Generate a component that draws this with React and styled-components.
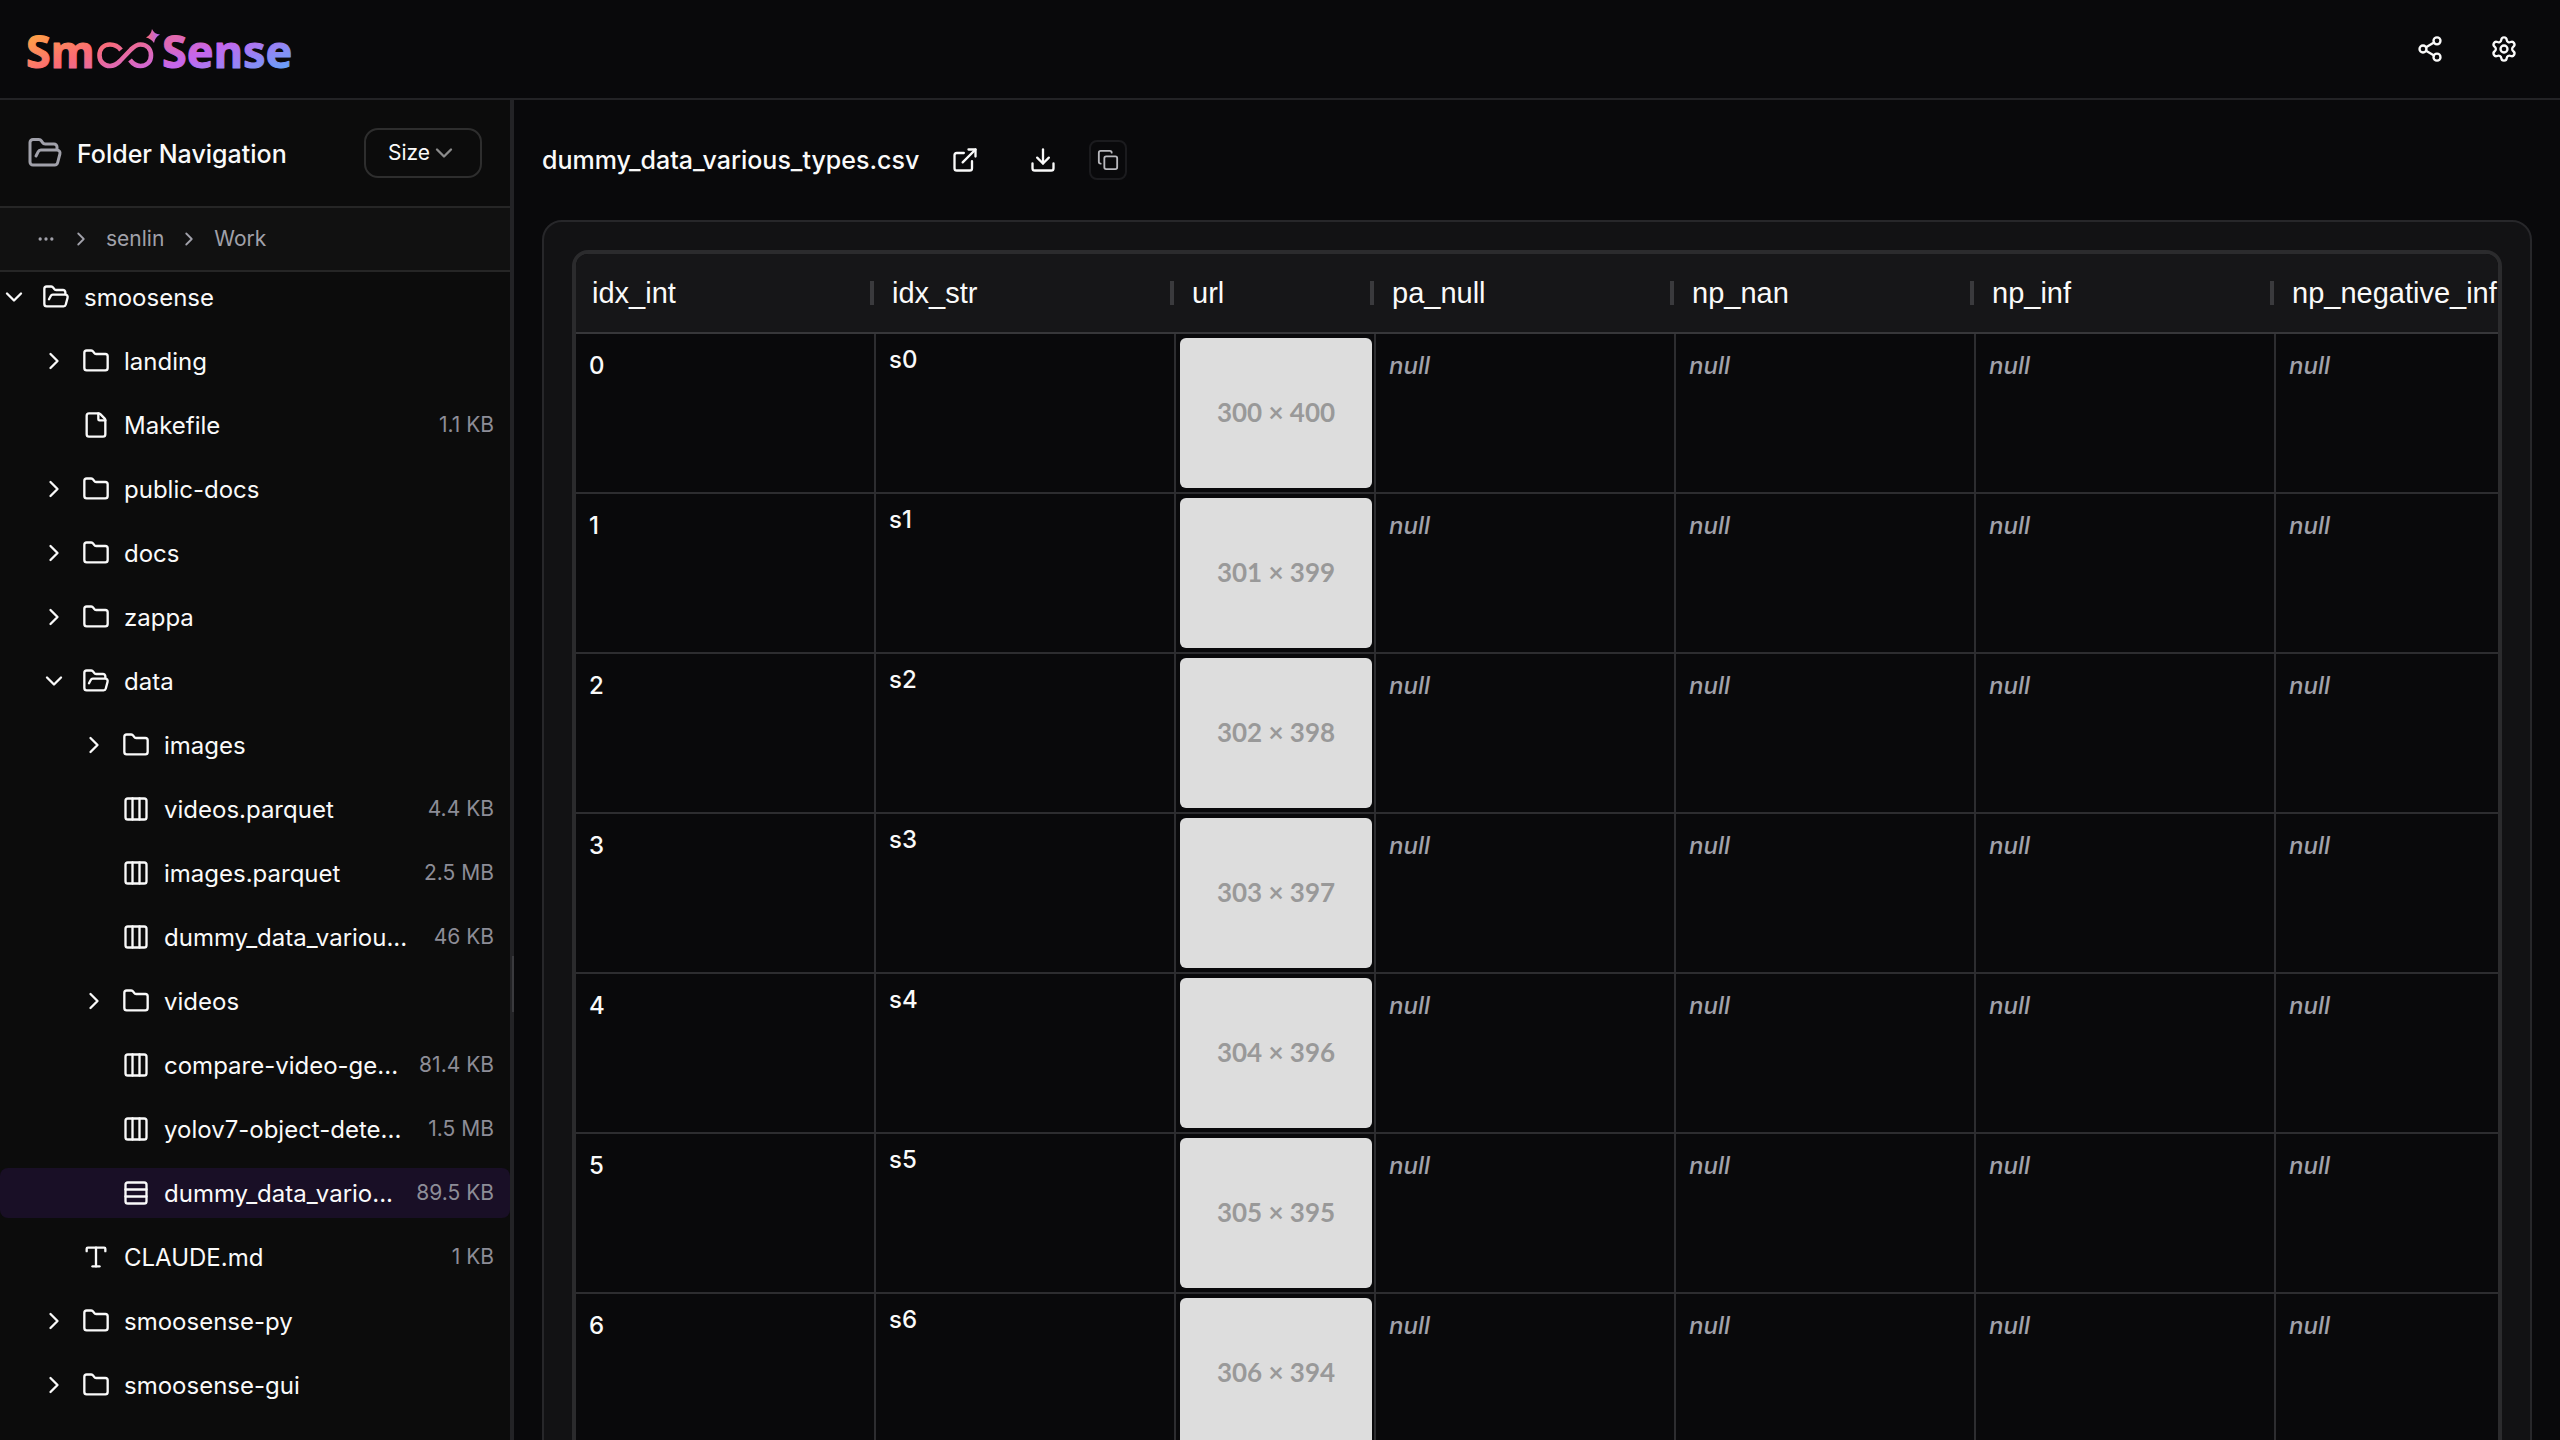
import React from "react";
import styled, { createGlobalStyle } from "styled-components";
import {
  ChevronDown,
  ChevronRight,
  Columns3,
  Copy,
  Download,
  Ellipsis,
  ExternalLink,
  File,
  Folder,
  FolderOpen,
  Rows3,
  Settings,
  Share2,
  Type,
} from "lucide-react";

const GlobalStyle = createGlobalStyle`
  *, *::before, *::after { box-sizing: border-box; }
  html, body, #root { height: 100%; }
  body {
    margin: 0;
    overflow: hidden;
    background: #09090b;
    color: #fafafa;
    font-family: Inter, "Noto Sans", sans-serif;
    font-size: 24px;
    line-height: 32px;
  }
  button, select { font: inherit; color: inherit; }
  svg { display: block; flex-shrink: 0; }
`;

const Page = styled.div`
  display: flex;
  flex-direction: column;
  height: 100vh;
`;

const TopBar = styled.header`
  display: flex;
  align-items: center;
  justify-content: space-between;
  height: 100px;
  padding: 0 26px;
  border-bottom: 2px solid #232326;
`;

const HomeLink = styled.a`
  display: block;
`;

const Actions = styled.div`
  display: flex;
  align-items: center;
  gap: 14px;
`;

const IconButton = styled.button`
  display: flex;
  align-items: center;
  justify-content: center;
  width: ${(p) => p.$width || 64}px;
  height: 50px;
  padding: 0;
  border: 0;
  background: none;
  cursor: pointer;
`;

const CopyButton = styled(IconButton)`
  height: 40px;
  border: 2px solid #1b1b1e;
  border-radius: 8px;
  color: #b9b9be;
`;

const Body = styled.div`
  display: flex;
  flex: 1;
  min-height: 0;
`;

const Sidebar = styled.aside`
  flex: 0 0 510px;
  overflow: hidden;
  background: #0c0c0c;
`;

const SidebarHeader = styled.div`
  display: flex;
  align-items: center;
  gap: 14px;
  height: 108px;
  padding: 0 28px 0 27px;
  border-bottom: 2px solid #262626;
  svg { color: #a1a1aa; }
`;

const SidebarTitle = styled.h2`
  flex: 1;
  margin: 0;
  padding-top: 2px;
  font-size: 25px;
  font-weight: 500;
`;

const SortBox = styled.label`
  display: grid;
  grid-template-columns: 1fr 28px;
  align-items: center;
  width: 118px;
  height: 50px;
  padding-right: 22px;
  border: 2px solid #2e2e2e;
  border-radius: 14px;
  svg { grid-area: 1 / 2; color: #8b8b8b; pointer-events: none; }
`;

const SortSelect = styled.select`
  grid-area: 1 / 1 / 2 / 3;
  width: 100%;
  height: 46px;
  padding: 0 0 0 22px;
  border: 0;
  background: transparent;
  appearance: none;
  font-size: 21px;
`;

const Breadcrumb = styled.nav`
  display: flex;
  align-items: center;
  height: 64px;
  padding: 0 36px;
  gap: 14px;
  border-bottom: 2px solid #262626;
  background: #111111;
  color: #a1a1aa;
  font-size: 21px;
`;

const Crumb = styled.a`
  color: inherit;
  text-decoration: none;
`;

const Tree = styled.ul`
  display: flex;
  flex-direction: column;
  gap: 14px;
  margin: 0;
  padding: 0;
  list-style: none;
`;

const TreeRow = styled.li`
  display: flex;
  align-items: center;
  gap: 14px;
  height: 50px;
  padding: 0 16px 0 ${(p) => p.$level * 40}px;
  border-radius: 8px;
  background: ${(p) => (p.$selected ? "#190f26" : "transparent")};
`;

const Toggle = styled.span`
  flex: 0 0 28px;
`;

const FileName = styled.span`
  flex: 1;
  padding-top: 2px;
  white-space: nowrap;
`;

const FileSize = styled.span`
  color: #8d8d97;
  font-size: 21px;
  white-space: nowrap;
`;

const Splitter = styled.div`
  display: grid;
  grid-template-rows: 2fr 56px 1fr;
  flex: 0 0 4px;
  justify-items: end;
  background: #232326;
`;

const Grip = styled.span`
  grid-row: 2;
  width: 2px;
  background: #3a3a3e;
`;

const Main = styled.main`
  flex: 1;
  min-width: 0;
  overflow: hidden;
  padding: 28px 28px 0 28px;
`;

const FileBar = styled.div`
  display: flex;
  align-items: center;
  gap: 14px;
  height: 64px;
  margin-bottom: 28px;
`;

const FileTitle = styled.h1`
  margin: 0;
  font-size: 25px;
  font-weight: 500;
`;

const Card = styled.section`
  padding: 28px;
  border: 2px solid #27272a;
  border-radius: 20px;
  background: #121214;
`;

const GridFrame = styled.div`
  overflow: hidden;
  border: 4px solid #2b2b2d;
  border-radius: 16px 16px 0 0;
  background: #09090b;
`;

const Table = styled.table`
  table-layout: fixed;
  width: 2000px;
  border-spacing: 0;
`;

const Col = styled.col`
  width: ${(p) => p.$width}px;
`;

const HeadCell = styled.th`
  height: 80px;
  padding: 0;
  border-bottom: 2px solid #37373a;
  background: #161618;
  font-family: "Liberation Sans", Arial, sans-serif;
  font-size: 29px;
  font-weight: 400;
  text-align: left;
`;

const HeadLabel = styled.div`
  display: flex;
  align-items: center;
  justify-content: space-between;
  padding: 0 2px 0 16px;
  &::after {
    content: "";
    width: 4px;
    height: 24px;
    background: #3a3a3d;
  }
`;

const cellTop = { image: 4, text: 10, number: 16 };

const Cell = styled.td`
  height: 160px;
  padding: ${(p) => cellTop[p.$kind]}px ${(p) => (p.$kind === "image" ? "2px 0 4px" : "12px 0 13px")};
  border-right: 2px solid #2d2d30;
  border-bottom: 2px solid #2d2d30;
  vertical-align: top;
  font-weight: 500;
`;

const Null = styled.em`
  color: #a1a1aa;
`;

const Thumb = styled.div`
  display: flex;
  align-items: center;
  justify-content: center;
  height: 150px;
  padding-bottom: 2px;
  border-radius: 6px;
  background: #dddddd;
  color: #999999;
  font-family: Lato, sans-serif;
  font-size: 26px;
  font-weight: 700;
`;

const LogoText = styled.text`
  font-family: "Noto Sans", sans-serif;
  font-size: 45px;
  font-weight: 700;
  stroke: url(#brand);
  stroke-width: 1px;
  stroke-linejoin: round;
`;

function Logo() {
  return (
    <svg width="280" height="80" viewBox="26 10 280 80" overflow="visible" role="img" aria-label="SmooSense">
      <defs>
        <linearGradient id="brand" gradientUnits="userSpaceOnUse" x1="28" y1="37" x2="87" y2="165">
          <stop offset="0" stopColor="#ffa244" />
          <stop offset="0.27" stopColor="#fb6b74" />
          <stop offset="0.63" stopColor="#c566ee" />
          <stop offset="1" stopColor="#60a5fa" />
        </linearGradient>
        <linearGradient id="spark" x1="0" y1="0.5" x2="1" y2="0.5">
          <stop offset="0" stopColor="#fb6b74" />
          <stop offset="1" stopColor="#b066fa" />
        </linearGradient>
      </defs>
      <g fill="url(#brand)">
        <LogoText x="26" y="69">Sm</LogoText>
        <LogoText x="162" y="69">Sense</LogoText>
      </g>
      <path
        d="M121 51 C118 47 114 45.500 110 45.500 C103.500 45.500 99.500 50 99.500 56.500 C99.500 62.500 104 67 110 67 C114 67 117 65 120 62 L131 50.500 C134 47.500 137 45.500 140.500 45.500 C147 45.500 151 50 151 56.500 C151 62.500 147 67 140.500 67 C136 67 133 65 130 61"
        fill="none"
        stroke="url(#brand)"
        strokeWidth="4.600"
      />
      <path d="M152 30 Q154 35 160 35.500 Q155 38 154 44 Q151 39.500 146 38.500 Q151 36 152 30 Z" fill="url(#spark)" />
    </svg>
  );
}

const icons = { open: FolderOpen, folder: Folder, file: File, columns: Columns3, rows: Rows3, text: Type };

const files = [
  { level: 0, icon: "open", name: "smoosense" },
  { level: 1, icon: "folder", name: "landing" },
  { level: 1, icon: "file", name: "Makefile", size: "1.1 KB" },
  { level: 1, icon: "folder", name: "public-docs" },
  { level: 1, icon: "folder", name: "docs" },
  { level: 1, icon: "folder", name: "zappa" },
  { level: 1, icon: "open", name: "data" },
  { level: 2, icon: "folder", name: "images" },
  { level: 2, icon: "columns", name: "videos.parquet", size: "4.4 KB" },
  { level: 2, icon: "columns", name: "images.parquet", size: "2.5 MB" },
  { level: 2, icon: "columns", name: "dummy_data_variou...", size: "46 KB" },
  { level: 2, icon: "folder", name: "videos" },
  { level: 2, icon: "columns", name: "compare-video-ge...", size: "81.4 KB" },
  { level: 2, icon: "columns", name: "yolov7-object-dete...", size: "1.5 MB" },
  { level: 2, icon: "rows", name: "dummy_data_vario...", size: "89.5 KB", selected: true },
  { level: 1, icon: "text", name: "CLAUDE.md", size: "1 KB" },
  { level: 1, icon: "folder", name: "smoosense-py" },
  { level: 1, icon: "folder", name: "smoosense-gui" },
];

const columns = [
  { name: "idx_int", width: 300 },
  { name: "idx_str", width: 300 },
  { name: "url", width: 200 },
  { name: "pa_null", width: 300 },
  { name: "np_nan", width: 300 },
  { name: "np_inf", width: 300 },
  { name: "np_negative_inf", width: 300 },
];

const rows = [0, 1, 2, 3, 4, 5, 6];

function TreeItem({ item }) {
  const Icon = icons[item.icon];
  return (
    <TreeRow $level={item.level} $selected={item.selected}>
      <Toggle>
        {item.icon === "open" && <ChevronDown size={28} />}
        {item.icon === "folder" && <ChevronRight size={28} />}
      </Toggle>
      <Icon size={28} />
      <FileName>{item.name}</FileName>
      {item.size && <FileSize>{item.size}</FileSize>}
    </TreeRow>
  );
}

export default function App() {
  return (
    <Page>
      <GlobalStyle />
      <TopBar>
        <HomeLink href="#">
          <Logo />
        </HomeLink>
        <Actions>
          <IconButton $width={60} aria-label="Share">
            <Share2 size={28} />
          </IconButton>
          <IconButton $width={60} aria-label="Settings">
            <Settings size={28} />
          </IconButton>
        </Actions>
      </TopBar>
      <Body>
        <Sidebar>
          <SidebarHeader>
            <FolderOpen size={36} />
            <SidebarTitle>Folder Navigation</SidebarTitle>
            <SortBox>
              <SortSelect aria-label="Sort by">
                <option>Size</option>
              </SortSelect>
              <ChevronDown size={28} />
            </SortBox>
          </SidebarHeader>
          <Breadcrumb aria-label="Path">
            <Crumb href="#" aria-label="Parent folders">
              <Ellipsis size={20} />
            </Crumb>
            <ChevronRight size={22} />
            <Crumb href="#">senlin</Crumb>
            <ChevronRight size={22} />
            <Crumb href="#">Work</Crumb>
          </Breadcrumb>
          <Tree>
            {files.map((item, i) => (
              <TreeItem key={i} item={item} />
            ))}
          </Tree>
        </Sidebar>
        <Splitter role="separator" aria-orientation="vertical">
          <Grip />
        </Splitter>
        <Main>
          <FileBar>
            <FileTitle>dummy_data_various_types.csv</FileTitle>
            <IconButton aria-label="Open in new tab">
              <ExternalLink size={28} />
            </IconButton>
            <IconButton aria-label="Download">
              <Download size={28} />
            </IconButton>
            <CopyButton $width={38} aria-label="Copy path">
              <Copy size={22} />
            </CopyButton>
          </FileBar>
          <Card>
            <GridFrame>
              <Table>
                <colgroup>
                  {columns.map((c) => (
                    <Col key={c.name} $width={c.width} />
                  ))}
                </colgroup>
                <thead>
                  <tr>
                    {columns.map((c) => (
                      <HeadCell key={c.name} scope="col">
                        <HeadLabel>{c.name}</HeadLabel>
                      </HeadCell>
                    ))}
                  </tr>
                </thead>
                <tbody>
                  {rows.map((n) => (
                    <tr key={n}>
                      <Cell $kind="number">{n}</Cell>
                      <Cell $kind="text">s{n}</Cell>
                      <Cell $kind="image">
                        <Thumb>{`${300 + n} × ${400 - n}`}</Thumb>
                      </Cell>
                      {columns.slice(3).map((c) => (
                        <Cell key={c.name} $kind="number">
                          <Null>null</Null>
                        </Cell>
                      ))}
                    </tr>
                  ))}
                </tbody>
              </Table>
            </GridFrame>
          </Card>
        </Main>
      </Body>
    </Page>
  );
}
